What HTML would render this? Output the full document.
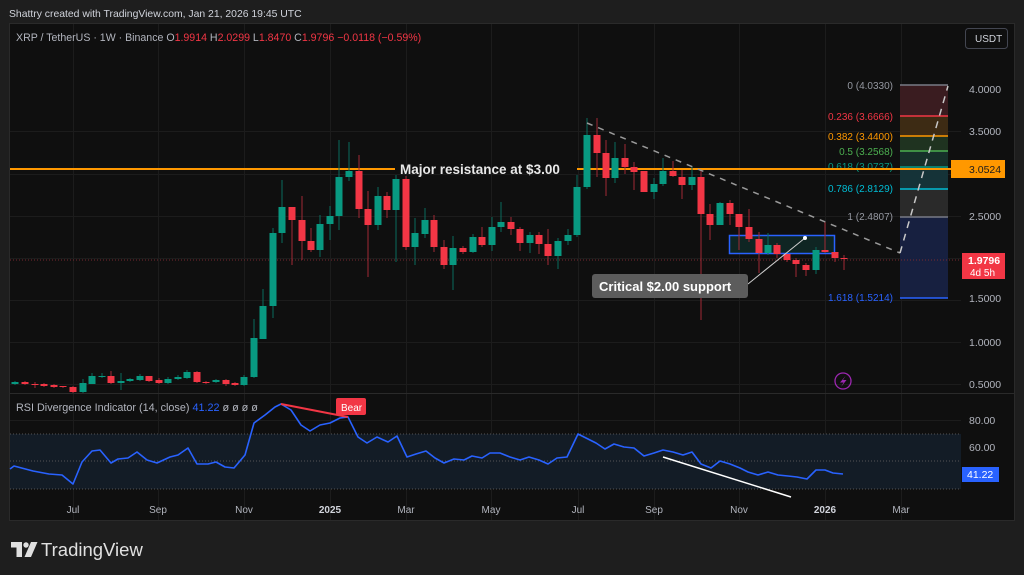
<!DOCTYPE html>
<html><head><meta charset="utf-8"><style>
html,body{margin:0;padding:0;background:#1e1e1e;width:1024px;height:575px;overflow:hidden;font-family:"Liberation Sans",sans-serif}
svg{position:absolute;left:0;top:0}
</style></head><body>
<svg id="s" width="1024" height="575" xmlns="http://www.w3.org/2000/svg" font-family="Liberation Sans, sans-serif">
<rect x="0" y="0" width="1024" height="575" fill="#1e1e1e"/>
<text x="9" y="17" font-size="10.4" fill="#d1d4dc">Shattry created with TradingView.com, Jan 21, 2026 19:45 UTC</text>
<rect x="9.5" y="23.5" width="1005" height="497" fill="#0f0f0f" stroke="#2a2a2a"/>
<g id="grid" stroke="#1c1c1c" stroke-width="1"></g>
<line x1="10" y1="393.5" x2="1014" y2="393.5" stroke="#2a2a2a"/>
<rect x="900" y="85" width="48" height="31" fill="#3a1c20"/>
<rect x="900" y="116" width="48" height="20" fill="#3d2b14"/>
<rect x="900" y="136" width="48" height="15" fill="#1f3320"/>
<rect x="900" y="151" width="48" height="16" fill="#16302a"/>
<rect x="900" y="167" width="48" height="22" fill="#153338"/>
<rect x="900" y="189" width="48" height="28" fill="#2a2a2a"/>
<rect x="900" y="217" width="48" height="81" fill="#172040"/>
<g stroke-width="1.5">
<line x1="900" y1="85" x2="948" y2="85" stroke="#787b86"/>
<line x1="900" y1="116" x2="948" y2="116" stroke="#f23645"/>
<line x1="900" y1="136" x2="948" y2="136" stroke="#ff9800"/>
<line x1="900" y1="151" x2="948" y2="151" stroke="#4caf50"/>
<line x1="900" y1="167" x2="948" y2="167" stroke="#089981"/>
<line x1="900" y1="189" x2="948" y2="189" stroke="#00bcd4"/>
<line x1="900" y1="217" x2="948" y2="217" stroke="#787b86"/>
<line x1="900" y1="298" x2="948" y2="298" stroke="#2962ff"/>
</g>
<g font-size="10" text-anchor="end">
<text x="893" y="89" fill="#9598a1">0 (4.0330)</text>
<text x="893" y="120" fill="#f23645">0.236 (3.6666)</text>
<text x="893" y="140" fill="#ff9800">0.382 (3.4400)</text>
<text x="893" y="155" fill="#4caf50">0.5 (3.2568)</text>
<text x="893" y="170" fill="#089981">0.618 (3.0737)</text>
<text x="893" y="192" fill="#00bcd4">0.786 (2.8129)</text>
<text x="893" y="220" fill="#9598a1">1 (2.4807)</text>
<text x="893" y="301" fill="#2962ff">1.618 (1.5214)</text>
</g>
<line x1="10" y1="260" x2="960" y2="260" stroke="#7a2a30" stroke-dasharray="1 2"/>
<line x1="10" y1="169" x2="395" y2="169" stroke="#ff9800" stroke-width="2"/>
<line x1="577" y1="169" x2="960" y2="169" stroke="#ff9800" stroke-width="2"/>
<text x="400" y="174" font-size="13.5" font-weight="bold" fill="#e8e8e8">Major resistance at  $3.00</text>
<rect x="729.5" y="235.5" width="105" height="18" fill="#0f2a28" stroke="#2962ff" stroke-width="1.5" fill-opacity="0.8"/>
<g id="candles"></g>
<line x1="587" y1="123" x2="900" y2="253" stroke="#9a9a9a" stroke-width="1.5" stroke-dasharray="6 6"/>
<line x1="900" y1="253" x2="948" y2="86" stroke="#c8c8c8" stroke-width="1.5" stroke-dasharray="7 6"/>
<line x1="748" y1="284" x2="805" y2="238" stroke="#cfcfcf" stroke-width="1"/>
<circle cx="805" cy="238" r="2" fill="#fff"/>
<rect x="592" y="274" width="156" height="24" rx="3" fill="#5c5c5c"/>
<text x="599" y="291" font-size="13" font-weight="bold" fill="#fff">Critical $2.00 support</text>
<circle cx="843" cy="381" r="8" fill="none" stroke="#9c27b0" stroke-width="1.3"/>
<path d="M845.5 376 L840 382.5 L843.5 382.5 L841 387 L846.5 380 L843 380 Z" fill="#9c27b0"/>
<g font-size="10.5" fill="#b2b5be">
<text x="969" y="93">4.0000</text>
<text x="969" y="135">3.5000</text>
<text x="969" y="220">2.5000</text>
<text x="969" y="302">1.5000</text>
<text x="969" y="346">1.0000</text>
<text x="969" y="388">0.5000</text>
<text x="969" y="424">80.00</text>
<text x="969" y="451">60.00</text>
</g>
<rect x="951" y="160" width="54" height="18" fill="#ff9800"/>
<text x="969" y="173" font-size="10.5" fill="#1e1e1e">3.0524</text>
<rect x="962" y="253" width="43" height="26" fill="#f23645"/>
<text x="968" y="264" font-size="10.5" font-weight="bold" fill="#fff">1.9796</text>
<text x="970" y="276" font-size="10" fill="#fff">4d 5h</text>
<rect x="965.5" y="28.5" width="42" height="20" rx="3" fill="#0f0f0f" stroke="#434651"/>
<text x="975" y="42" font-size="10" fill="#d1d4dc">USDT</text>
<text x="16" y="41" font-size="10.6" fill="#b2b5be">XRP / TetherUS · 1W · Binance  O<tspan fill="#f23645">1.9914</tspan>  H<tspan fill="#f23645">2.0299</tspan>  L<tspan fill="#f23645">1.8470</tspan>  C<tspan fill="#f23645">1.9796</tspan>  <tspan fill="#f23645">−0.0118 (−0.59%)</tspan></text>
<rect x="10" y="434" width="951" height="55" fill="#131c26"/>
<g stroke="#555" stroke-dasharray="1 2">
<line x1="10" y1="434" x2="961" y2="434"/><line x1="10" y1="461" x2="961" y2="461"/><line x1="10" y1="489" x2="961" y2="489"/>
</g>
<path id="rsi" fill="none" stroke="#2962ff" stroke-width="1.6" stroke-linejoin="round"/>
<line x1="281" y1="404" x2="348" y2="417" stroke="#f23645" stroke-width="2"/>
<line x1="663" y1="457" x2="791" y2="497" stroke="#ffffff" stroke-width="1.5"/>
<rect x="336" y="398" width="30" height="17" rx="2" fill="#f23645"/>
<text x="341" y="411" font-size="10" fill="#fff">Bear</text>
<text x="16" y="411" font-size="10.8" fill="#b2b5be">RSI Divergence Indicator (14, close) <tspan fill="#2962ff">41.22</tspan>  ø  ø  ø  ø</text>
<rect x="962" y="467" width="37" height="15" fill="#2962ff"/>
<text x="967" y="478" font-size="10.5" fill="#fff">41.22</text>
<g font-size="10" fill="#b2b5be" text-anchor="middle">
<text x="73" y="513">Jul</text><text x="158" y="513">Sep</text><text x="244" y="513">Nov</text>
<text x="330" y="513" font-weight="bold" fill="#d1d4dc">2025</text><text x="406" y="513">Mar</text><text x="491" y="513">May</text>
<text x="578" y="513">Jul</text><text x="654" y="513">Sep</text><text x="739" y="513">Nov</text>
<text x="825" y="513" font-weight="bold" fill="#d1d4dc">2026</text><text x="901" y="513">Mar</text>
</g>
<path d="M11 542 H22 V557 H16.5 V547.5 H11 Z" fill="#e0e0e0"/>
<circle cx="26" cy="545" r="2.7" fill="#e0e0e0"/>
<path d="M31 542 H37.5 L31 557 H24.5 Z" fill="#e0e0e0"/>
<text x="41" y="556" font-size="18.5" fill="#e0e0e0">TradingView</text>
</svg>
<script>
var NS="http://www.w3.org/2000/svg";
function el(p,t,a){var e=document.createElementNS(NS,t);for(var k in a)e.setAttribute(k,a[k]);p.appendChild(e);return e;}
var g=document.getElementById("grid");
[73,158,244,330,406,491,578,654,739,825,901].forEach(function(x){el(g,"line",{x1:x+.5,y1:24,x2:x+.5,y2:520});});
[131,174,216,258,300,342,384,420,447,474].forEach(function(y){el(g,"line",{x1:10,y1:y+.5,x2:961,y2:y+.5});});
var C=[
[15,382,384,381,385,1],[25,382,384,381,385,0],[35,384,385,382,388,0],[44,384,386,383,387,0],[54,385,387,384,388,0],[63,386,387,386,388,0],[73,387,392,386,393,0],[83,383,392,379,393,1],[92,376,384,373,384,1],[102,376,377,373,378,1],[111,376,383,371,384,0],[121,381,383,373,390,1],[130,379,381,378,382,1],[140,376,380,374,381,1],[149,376,381,376,382,0],[159,380,383,378,384,0],[168,379,383,377,384,1],[178,377,379,375,380,1],[187,372,378,370,379,1],[197,372,382,371,383,0],[206,382,383,381,384,0],[216,380,382,379,383,1],[226,380,384,379,386,0],[235,383,385,382,386,0],[244,377,385,375,386,1],[254,338,377,319,378,1],[263,306,339,289,339,1],[273,233,306,228,318,1],[282,207,233,180,243,1],
[292,207,220,207,265,0],[302,220,241,196,260,0],[311,241,250,228,252,0],[320,224,250,215,257,1],[330,216,224,206,240,1],[339,177,216,140,230,1],[349,171,177,142,181,1],[359,171,209,155,218,0],[368,209,225,191,277,0],[378,196,225,187,230,1],[387,196,210,192,218,0],[396,179,210,175,262,1],[406,179,247,176,250,0],[415,233,247,218,265,1],[425,220,234,208,238,1],[434,220,247,215,252,0],[444,247,265,240,269,0],[453,248,265,236,290,1],[463,248,252,246,254,0],[473,237,252,234,253,1],[482,237,245,227,247,0],[492,227,245,217,251,1],[501,222,227,202,232,1],[511,222,229,217,235,0],[520,229,243,227,251,0],[530,235,243,232,253,1],[539,235,244,232,254,0],[548,244,256,229,265,0],[558,241,256,238,269,1],[568,235,241,229,245,1],[577,187,235,175,237,1],
[587,135,187,118,189,1],[597,135,153,118,177,0],[606,153,178,140,196,0],[615,158,178,142,183,1],[625,158,167,144,174,0],[634,167,172,162,190,0],[644,171,192,171,192,0],[654,184,192,178,199,1],[663,171,184,158,186,1],[673,171,176,161,177,0],[682,177,185,170,199,0],[692,177,185,166,190,1],[701,177,214,170,320,0],[710,214,225,204,240,0],[720,203,225,202,225,1],[730,203,214,200,225,0],[739,214,227,214,250,0],[749,227,239,209,242,0],[759,239,253,232,273,0],[768,245,253,233,255,1],[777,245,254,243,258,0],[787,254,260,254,262,0],[796,260,264,258,277,0],[806,265,270,263,276,0],[816,250,270,247,274,1],[825,250,252,222,253,0],[835,252,258,252,262,0],[844,258,259,255,270,0]];
var cg=document.getElementById("candles");
C.forEach(function(c){var col=c[5]?"#089981":"#f23645";
el(cg,"line",{x1:c[0],y1:c[3],x2:c[0],y2:c[4],stroke:c[5]?"#0a6b5c":"#a02a35","stroke-width":1});
el(cg,"rect",{x:c[0]-3.5,y:c[1],width:7,height:Math.max(1,c[2]-c[1]),fill:col});});
var R=[[10,469],[14,466],[33,471],[49,474],[62,475],[73,484],[82,462],[92,451],[100,450],[111,463],[118,459],[128,458],[137,452],[147,460],[157,463],[170,457],[178,455],[188,448],[197,464],[208,464],[216,462],[225,467],[234,468],[245,455],[254,423],[265,415],[275,407],[281,404],[291,410],[301,425],[310,431],[320,425],[330,423],[340,418],[348,417],[358,437],[367,443],[377,437],[388,442],[397,436],[407,457],[416,454],[426,451],[435,458],[444,463],[454,459],[464,460],[472,456],[482,458],[490,453],[500,453],[510,457],[520,460],[529,457],[539,460],[548,464],[557,458],[567,457],[578,434],[586,438],[596,443],[605,449],[614,444],[624,447],[634,448],[644,456],[654,453],[663,450],[673,452],[683,455],[692,452],[701,464],[711,468],[720,461],[730,464],[740,468],[748,472],[758,475],[768,472],[778,475],[788,476],[797,477],[807,479],[816,470],[825,470],[833,473],[843,474]];
document.getElementById("rsi").setAttribute("d","M"+R.map(function(p){return p.join(" ");}).join(" L"));
</script>
</body></html>
